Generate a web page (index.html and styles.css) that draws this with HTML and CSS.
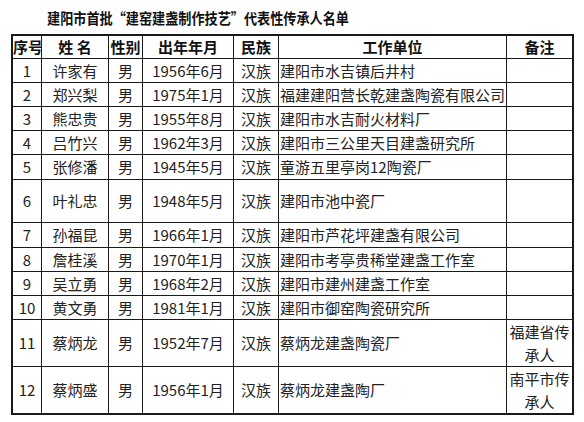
FILE: index.html
```html
<!DOCTYPE html>
<html lang="zh">
<head>
<meta charset="utf-8">
<title>建阳市首批“建窑建盏制作技艺”代表性传承人名单</title>
<link rel="stylesheet" href="styles.css">
</head>
<body>
<div class="title"><span class="title-text">建阳市首批“建窑建盏制作技艺”代表性传承人名单</span></div>
<table class="list">
  <thead>
    <tr class="h23">
      <th class="c1">序号</th>
      <th class="c2">姓 名</th>
      <th class="c3">性别</th>
      <th class="c4">出年年月</th>
      <th class="c5">民族</th>
      <th class="c6">工作单位</th>
      <th class="c7">备注</th>
    </tr>
  </thead>
  <tbody>
    <tr class="h24"><td>1</td><td>许家有</td><td>男</td><td>1956年6月</td><td>汉族</td><td class="unit">建阳市水吉镇后井村</td><td></td></tr>
    <tr class="h24"><td>2</td><td>郑兴梨</td><td>男</td><td>1975年1月</td><td>汉族</td><td class="unit">福建建阳营长乾建盏陶瓷有限公司</td><td></td></tr>
    <tr class="h24"><td>3</td><td>熊忠贵</td><td>男</td><td>1955年8月</td><td>汉族</td><td class="unit">建阳市水吉耐火材料厂</td><td></td></tr>
    <tr class="h24"><td>4</td><td>吕竹兴</td><td>男</td><td>1962年3月</td><td>汉族</td><td class="unit">建阳市三公里天目建盏研究所</td><td></td></tr>
    <tr class="h25"><td>5</td><td>张修潘</td><td>男</td><td>1945年5月</td><td>汉族</td><td class="unit">童游五里亭岗12陶瓷厂</td><td></td></tr>
    <tr class="h43"><td>6</td><td>叶礼忠</td><td>男</td><td>1948年5月</td><td>汉族</td><td class="unit">建阳市池中瓷厂</td><td></td></tr>
    <tr class="h25"><td>7</td><td>孙福昆</td><td>男</td><td>1966年1月</td><td>汉族</td><td class="unit">建阳市芦花坪建盏有限公司</td><td></td></tr>
    <tr class="h24"><td>8</td><td>詹桂溪</td><td>男</td><td>1970年1月</td><td>汉族</td><td class="unit">建阳市考亭贵稀堂建盏工作室</td><td></td></tr>
    <tr class="h24"><td>9</td><td>吴立勇</td><td>男</td><td>1968年2月</td><td>汉族</td><td class="unit">建阳市建州建盏工作室</td><td></td></tr>
    <tr class="h24"><td>10</td><td>黄文勇</td><td>男</td><td>1981年1月</td><td>汉族</td><td class="unit">建阳市御窑陶瓷研究所</td><td></td></tr>
    <tr class="h46"><td>11</td><td>蔡炳龙</td><td>男</td><td>1952年7月</td><td>汉族</td><td class="unit">蔡炳龙建盏陶瓷厂</td><td class="note">福建省传<br>承人</td></tr>
    <tr class="h45 last"><td>12</td><td>蔡炳盛</td><td>男</td><td>1956年1月</td><td>汉族</td><td class="unit">蔡炳龙建盏陶厂</td><td class="note">南平市传<br>承人</td></tr>
  </tbody>
</table>
</body>
</html>
```
FILE: styles.css
```css
html, body {
  margin: 0;
  padding: 0;
  background: #ffffff;
}
body {
  font-family: "Noto Sans CJK SC", "Microsoft YaHei", sans-serif;
  color: #222;
  width: 584px;
  height: 422px;
  overflow: hidden;
}
.title {
  height: 34px;
  padding-left: 47px;
  line-height: 34px;
  white-space: nowrap;
}
.title-text {
  display: inline-block;
  font-size: 15px;
  font-weight: bold;
  color: #111;
  transform: scaleX(0.875);
  transform-origin: left center;
}
.list {
  margin-left: 11px;
  width: 563px;
  border: 2px solid #1a1a1a;
  border-collapse: separate;
  border-spacing: 0;
  table-layout: fixed;
  font-size: 15px;
}
.list th, .list td {
  box-sizing: border-box;
  padding: 0;
  border-right: 1px solid #1a1a1a;
  border-bottom: 1px solid #1a1a1a;
  text-align: center;
  vertical-align: middle;
  white-space: nowrap;
  overflow: hidden;
  line-height: 20px;
}
.list th:last-child, .list td:last-child {
  border-right: none;
}
.list tr.last td {
  border-bottom: none;
}
.list th {
  font-weight: bold;
  color: #111;
}
.c1 { width: 29px; }
.c2 { width: 67px; }
.c3 { width: 34px; }
.c4 { width: 91px; }
.c5 { width: 45px; }
.c6 { width: 228px; }
.c7 { width: 65px; }
.list td.unit {
  text-align: left;
  padding-left: 1px;
}
.list td.note {
  line-height: 23px;
  white-space: normal;
}
.h23 th { height: 23px; }
.h24 td { height: 24px; }
.h25 td { height: 25px; }
.h43 td { height: 43px; }
.h46 td { height: 46px; }
.h45 td { height: 45px; }
```
